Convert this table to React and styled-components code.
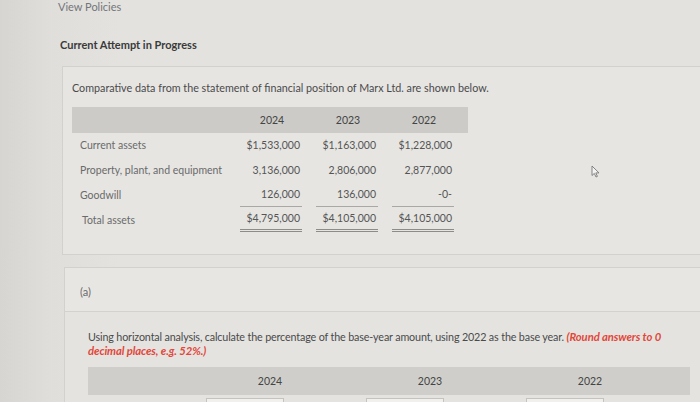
import React from "react";
import styled, { createGlobalStyle } from "styled-components";

const GlobalStyle = createGlobalStyle`
  html, body {
    margin: 0;
    padding: 0;
    background: #dddcd9;
  }
  body {
    font-family: Lato, "Open Sans", "Liberation Sans", sans-serif;
  }
`;

const Page = styled.div`
  position: relative;
  width: 700px;
  height: 402px;
  overflow: hidden;
  padding-left: 58px;
  box-sizing: border-box;
  background: linear-gradient(90deg, #d6d5d2 0px, #dfdedb 50px, #e3e2df 120px, #e3e2df 100%);
`;

const PolicyLink = styled.div`
  font-size: 11px;
  line-height: 13px;
  color: #74757a;
`;

const AttemptTitle = styled.div`
  margin-top: 25px;
  margin-left: 2px;
  font-size: 11px;
  line-height: 14px;
  font-weight: 700;
  color: #3a3a3a;
`;

const Card = styled.div`
  margin-top: 14px;
  margin-left: 4px;
  width: 700px;
  padding: 14px 0 22px 9px;
  border: 1px solid #d2d1ce;
  border-right: none;
  background: #e6e5e2;
`;

const Intro = styled.p`
  margin: 0;
  font-size: 10.75px;
  line-height: 14px;
  color: #4a4a4a;
`;

const DataTable = styled.div`
  margin-top: 12px;
  display: grid;
  grid-template-columns: 162px 76px 76px 76px 6px;
  width: 396px;
`;

const HeadCell = styled.div`
  height: 26px;
  background: #cccbc8;
  display: flex;
  align-items: center;
  justify-content: center;
  font-size: 10.5px;
  color: #444;
`;

const Label = styled.div`
  height: ${p => p.h}px;
  display: flex;
  align-items: center;
  padding-left: ${p => p.indent || 8}px;
  font-size: 10.5px;
  color: #6a6a6a;
`;

const Value = styled.div`
  height: ${p => p.h}px;
  display: flex;
  align-items: center;
  justify-content: flex-end;
  margin: 0 8px 0 6px;
  padding-right: 2px;
  font-size: 10.5px;
  color: #555;
  border-bottom: ${p =>
    p.rule === "double" ? "3px double #8d8c89" : p.rule === "single" ? "1px solid #a9a8a5" : "none"};
`;

const Spacer = styled.div``;

const PartCard = styled.div`
  margin-top: 12px;
  margin-left: 6px;
  width: 700px;
  border: 1px solid #d2d1ce;
  border-right: none;
  background: #e4e3e0;
`;

const PartHeader = styled.div`
  height: 44px;
  box-sizing: border-box;
  padding: 17px 0 0 15px;
  font-size: 11px;
  line-height: 14px;
  color: #6a6a6a;
  border-bottom: 1px solid #d3d2cf;
  background: #e7e6e3;
`;

const PartBody = styled.div`
  padding: 18px 0 0 23px;
`;

const Instructions = styled.p`
  margin: 0;
  width: 590px;
  font-size: 10.75px;
  line-height: 14px;
  letter-spacing: -0.15px;
  color: #4a4a4a;
`;

const Hint = styled.span`
  color: #e2473a;
  font-size: 11.3px;
  font-weight: 700;
  font-style: italic;
  letter-spacing: -0.1px;
`;

const AnswerHead = styled.div`
  margin-top: 9px;
  width: 602px;
  height: 28px;
  display: grid;
  grid-template-columns: 102px 160px 160px 160px 20px;
  align-items: center;
  background: #cfcecb;
`;

const YearCell = styled.div`
  text-align: center;
  font-size: 10.5px;
  color: #444;
`;

const AnswerRow = styled.div`
  margin-top: 3px;
  display: grid;
  grid-template-columns: 102px 160px 160px 160px;
`;

const AnswerInput = styled.div`
  margin-left: 16px;
  width: 76px;
  height: 20px;
  background: #f1f0ed;
  border: 1px solid #c4c3c0;
`;

const Pointer = styled.svg`
  position: absolute;
  left: 591px;
  top: 165px;
`;

const rows = [
  { label: "Current assets", values: ["$1,533,000", "$1,163,000", "$1,228,000"], h: 24 },
  { label: "Property, plant, and equipment", values: ["3,136,000", "2,806,000", "2,877,000"], h: 25 },
  { label: "Goodwill", values: ["126,000", "136,000", "-0-"], h: 25, rule: "single" },
  { label: "Total assets", values: ["$4,795,000", "$4,105,000", "$4,105,000"], h: 25, rule: "double", indent: 10 }
];

const years = ["2024", "2023", "2022"];

const App = () => {
  return (
    <Page>
      <GlobalStyle />
      <PolicyLink>View Policies</PolicyLink>
      <AttemptTitle>Current Attempt in Progress</AttemptTitle>
      <Card>
        <Intro>Comparative data from the statement of financial position of Marx Ltd. are shown below.</Intro>
        <DataTable>
          <HeadCell />
          {years.map(y => (
            <HeadCell key={y}>{y}</HeadCell>
          ))}
          <HeadCell />
          {rows.map(r => (
            <React.Fragment key={r.label}>
              <Label h={r.h} indent={r.indent}>{r.label}</Label>
              {r.values.map((v, i) => (
                <Value key={i} h={r.rule ? r.h - (r.rule === "double" ? 3 : 1) : r.h} rule={r.rule}>
                  {v}
                </Value>
              ))}
              <Spacer />
            </React.Fragment>
          ))}
        </DataTable>
      </Card>
      <PartCard>
        <PartHeader>(a)</PartHeader>
        <PartBody>
          <Instructions>
            Using horizontal analysis, calculate the percentage of the base-year amount, using 2022 as the base year.{" "}
            <Hint>(Round answers to 0 decimal places, e.g. 52%.)</Hint>
          </Instructions>
          <AnswerHead>
            <span />
            {years.map(y => (
              <YearCell key={y}>{y}</YearCell>
            ))}
          </AnswerHead>
          <AnswerRow>
            <span />
            {years.map(y => (
              <AnswerInput key={y} />
            ))}
          </AnswerRow>
        </PartBody>
      </PartCard>
      <Pointer width="9" height="13" viewBox="0 0 9 13">
        <path d="M1 1 L1 10.5 L3.3 8.4 L5 12 L6.4 11.4 L4.8 7.9 L8 7.9 Z" fill="#f4f4f4" stroke="#777" strokeWidth="0.9" strokeLinejoin="round" />
      </Pointer>
    </Page>
  );
};

export default App;
